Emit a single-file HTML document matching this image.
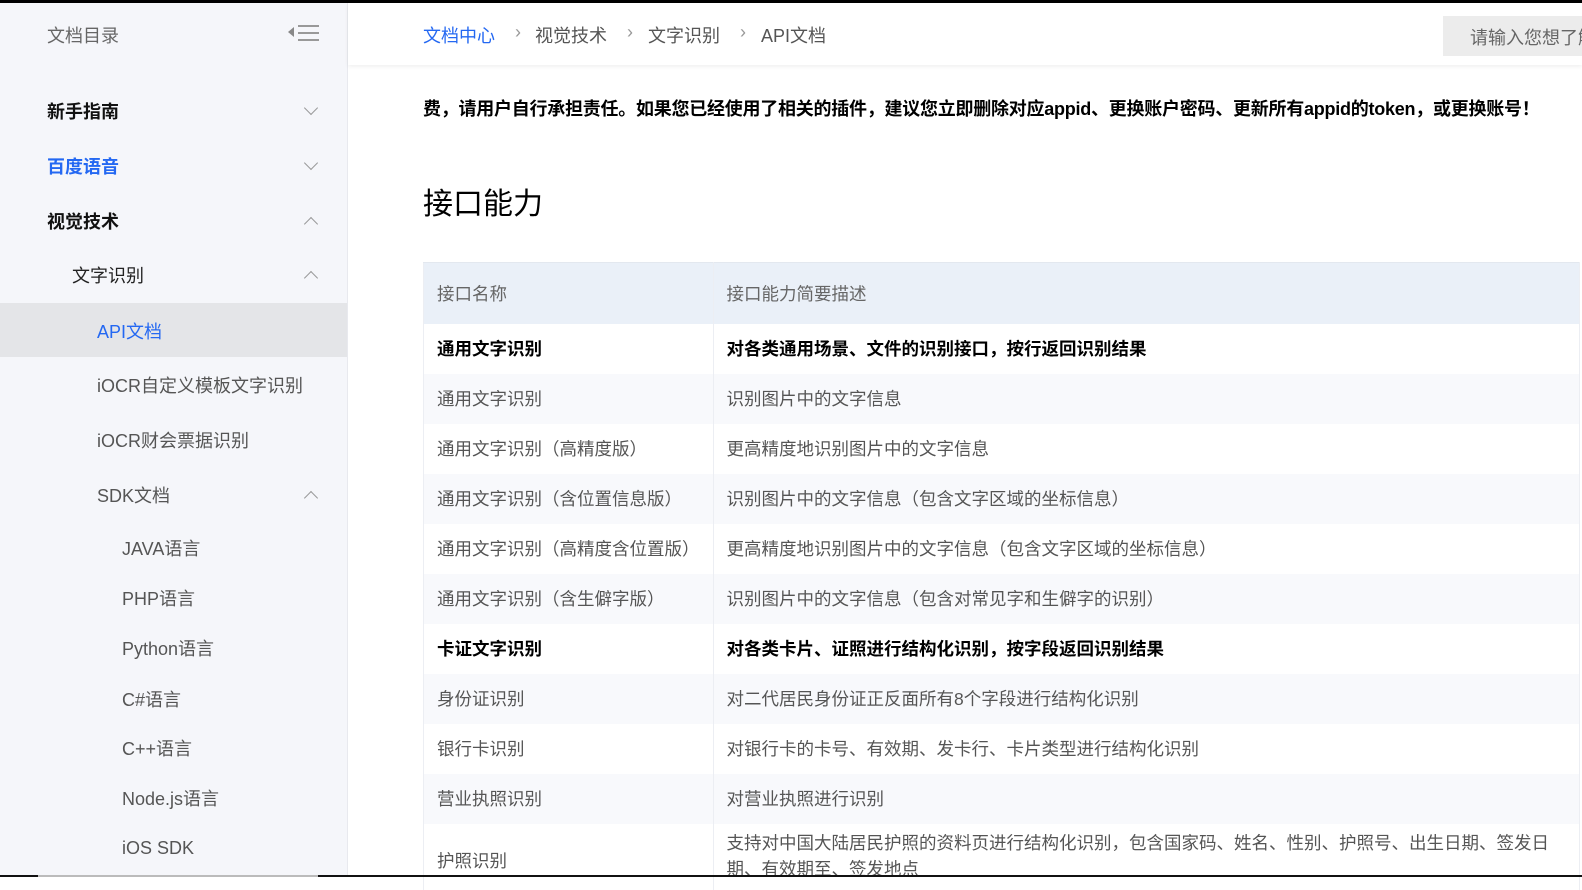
<!DOCTYPE html>
<html><head><meta charset="utf-8"><style>
*{margin:0;padding:0;box-sizing:border-box}
body{width:1582px;height:877px;overflow:hidden;background:#fff;font-family:"Liberation Sans","Noto Sans CJK SC",sans-serif;position:relative;color:#333}
.topbar{position:absolute;left:0;top:0;width:1582px;height:3px;background:#000}
.bot{position:absolute;left:0;top:875px;width:1582px;height:2px;background:#111}
.bot i{position:absolute;left:38px;top:0;width:280px;height:2px;background:#bbb}
.side{position:absolute;left:0;top:3px;width:348px;height:872px;background:#f5f6fa;border-right:1px solid #e8e9ee}
.si{position:absolute;font-size:18px;white-space:nowrap}
.chev{position:absolute;left:306px;width:10px;height:10px;border-right:1.5px solid #999;border-bottom:1.5px solid #999}
.down{transform:rotate(45deg)}
.up{transform:rotate(-135deg)}
.hdr{position:absolute;left:348px;top:3px;width:1234px;height:62px;background:#fff;box-shadow:0 2px 4px rgba(0,0,0,.06)}
.bc{position:absolute;top:19px;font-size:18px;color:#555;white-space:nowrap}
.search{position:absolute;left:1443px;top:16px;width:150px;height:40px;background:#ececec;color:#666;font-size:18px;padding:8px 0 0 27px;white-space:nowrap;overflow:hidden}
table{position:absolute;left:423px;top:262px;width:1157px;border-collapse:collapse;font-size:17.5px}
td{height:50px;padding:0 13px;color:#555;border-right:1px solid #eceef3;vertical-align:middle;white-space:nowrap}
td:first-child{width:289px;border-left:1px solid #eceef3}
tr.h td{height:61px;background:#eaf0f8;color:#666;border-top:1px solid #e3e8ef}
tr.g td{background:#f8f9fc}
tr.b td{font-weight:bold;color:#000}
</style></head><body>
<div class="topbar"></div>
<div class="side">
<div class="si" style="left:47px;top:19px;color:#666">文档目录</div>
<svg style="position:absolute;left:288px;top:19px" width="32" height="22"><polygon points="0,10 6,5 6,15" fill="#888"/><rect x="10" y="3" width="21" height="2" fill="#999"/><rect x="10" y="10" width="21" height="2" fill="#999"/><rect x="10" y="17" width="21" height="2" fill="#999"/></svg>
<div class="si" style="left:47px;top:95px;font-weight:bold;color:#111">新手指南</div><div class="chev down" style="top:100px"></div>
<div class="si" style="left:47px;top:150px;font-weight:bold;color:#2468f2">百度语音</div><div class="chev down" style="top:155px"></div>
<div class="si" style="left:47px;top:205px;font-weight:bold;color:#111">视觉技术</div><div class="chev up" style="top:216px"></div>
<div class="si" style="left:72px;top:259px;color:#222">文字识别</div><div class="chev up" style="top:270px"></div>
<div style="position:absolute;left:0;top:300px;width:347px;height:54px;background:#e4e5e8"></div>
<div class="si" style="left:97px;top:315px;color:#2468f2">API文档</div>
<div class="si" style="left:97px;top:369px;color:#555">iOCR自定义模板文字识别</div>
<div class="si" style="left:97px;top:424px;color:#555">iOCR财会票据识别</div>
<div class="si" style="left:97px;top:479px;color:#555">SDK文档</div><div class="chev up" style="top:490px"></div>
<div class="si" style="left:122px;top:532px;color:#555">JAVA语言</div>
<div class="si" style="left:122px;top:582px;color:#555">PHP语言</div>
<div class="si" style="left:122px;top:632px;color:#555">Python语言</div>
<div class="si" style="left:122px;top:683px;color:#555">C#语言</div>
<div class="si" style="left:122px;top:732px;color:#555">C++语言</div>
<div class="si" style="left:122px;top:782px;color:#555">Node.js语言</div>
<div class="si" style="left:122px;top:835px;color:#555">iOS SDK</div>
</div>
<div class="hdr">
<div class="bc" style="left:75px;color:#2468f2">文档中心</div>
<div class="bc" style="left:167px;color:#999">›</div>
<div class="bc" style="left:187px">视觉技术</div>
<div class="bc" style="left:279px;color:#999">›</div>
<div class="bc" style="left:300px">文字识别</div>
<div class="bc" style="left:392px;color:#999">›</div>
<div class="bc" style="left:413px">API文档</div>
</div>
<div class="search">请输入您想了解的内容</div>
<div style="position:absolute;left:423px;top:95px;font-size:18px;font-weight:bold;color:#000;white-space:nowrap;letter-spacing:-0.25px">费，请用户自行承担责任。如果您已经使用了相关的插件，建议您立即删除对应appid、更换账户密码、更新所有appid的token，或更换账号！</div>
<div style="position:absolute;left:423px;top:179px;font-size:30px;color:#000">接口能力</div>
<table>
<tr class="h"><td>接口名称</td><td>接口能力简要描述</td></tr>
<tr class="b"><td>通用文字识别</td><td>对各类通用场景、文件的识别接口，按行返回识别结果</td></tr>
<tr class="g"><td>通用文字识别</td><td>识别图片中的文字信息</td></tr>
<tr><td>通用文字识别（高精度版）</td><td>更高精度地识别图片中的文字信息</td></tr>
<tr class="g"><td>通用文字识别（含位置信息版）</td><td>识别图片中的文字信息（包含文字区域的坐标信息）</td></tr>
<tr><td>通用文字识别（高精度含位置版）</td><td>更高精度地识别图片中的文字信息（包含文字区域的坐标信息）</td></tr>
<tr class="g"><td>通用文字识别（含生僻字版）</td><td>识别图片中的文字信息（包含对常见字和生僻字的识别）</td></tr>
<tr class="b"><td>卡证文字识别</td><td>对各类卡片、证照进行结构化识别，按字段返回识别结果</td></tr>
<tr class="g"><td>身份证识别</td><td>对二代居民身份证正反面所有8个字段进行结构化识别</td></tr>
<tr><td>银行卡识别</td><td>对银行卡的卡号、有效期、发卡行、卡片类型进行结构化识别</td></tr>
<tr class="g"><td>营业执照识别</td><td>对营业执照进行识别</td></tr>
<tr><td style="height:66px;padding-top:8px">护照识别</td><td style="height:66px;white-space:normal;line-height:26px;padding-top:6px;vertical-align:top">支持对中国大陆居民护照的资料页进行结构化识别，包含国家码、姓名、性别、护照号、出生日期、签发日期、有效期至、签发地点</td></tr>
</table>
<div class="bot"><i></i></div>
</body></html>
